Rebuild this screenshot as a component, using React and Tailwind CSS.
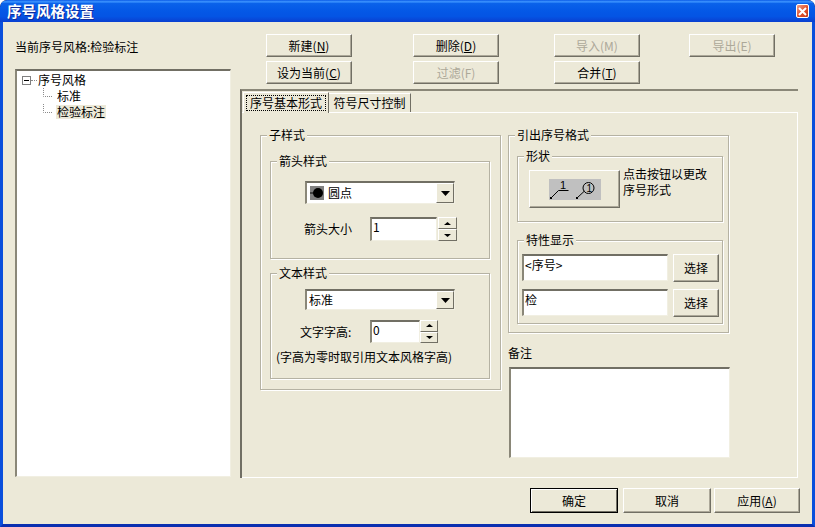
import React from "react";

const FONT = "[font-family:'Noto_Sans_CJK_SC','Liberation_Sans',sans-serif]";

function Btn({ w, h = "h-[23px]", children, disabled, isDefault, className = "" }) {
  return (
    <div
      className={`flex items-center justify-center shrink-0 bg-[#ece9d8] text-[12px] leading-[14px] ${h} ${w} ${className} ${
        isDefault
          ? "border border-black shadow-[inset_1px_1px_0_#fff,inset_-1px_-1px_0_#716f64]"
          : "border-t border-l border-t-white border-l-white border-r border-b border-r-[#716f64] border-b-[#716f64] shadow-[inset_-1px_-1px_0_#aca899]"
      } ${disabled ? "text-[#aca899]" : "text-black"}`}
    >
      {children}
    </div>
  );
}

function Group({ title, className = "", children }) {
  return (
    <div className={`relative shrink-0 border border-[#b5b2a3] shadow-[1px_1px_0_#fff,inset_1px_1px_0_#fff] ${className}`}>
      <span className="absolute left-[6px] top-[-8px] bg-[#ece9d8] px-[2px] text-[12px] leading-[14px] text-black">{title}</span>
      {children}
    </div>
  );
}

function Sunken({ className = "", children }) {
  return (
    <div className={`shrink-0 bg-white border-t-2 border-l-2 border-t-[#716f64] border-l-[#8a8778] border-r border-b border-r-[#f1efe2] border-b-[#f1efe2] text-[12px] leading-[14px] text-black ${className}`}>
      {children}
    </div>
  );
}

function Tri({ up, w = 9, h = 5 }) {
  return (
    <svg width={w} height={h} viewBox={`0 0 ${w} ${h}`} className="block">
      <polygon points={up ? `${w / 2},0 0,${h} ${w},${h}` : `0,0 ${w},0 ${w / 2},${h}`} fill="#000" />
    </svg>
  );
}

function Raised({ className = "", children }) {
  return (
    <div className={`flex items-center justify-center bg-[#ece9d8] border-t border-l border-t-white border-l-white border-r border-b border-r-[#716f64] border-b-[#716f64] ${className}`}>
      {children}
    </div>
  );
}

function Spin({ w }) {
  return (
    <div className={`flex flex-col self-stretch shrink-0 ${w}`}>
      <Raised className="flex-1"><Tri up w={7} h={3} /></Raised>
      <Raised className="flex-1"><Tri w={7} h={3} /></Raised>
    </div>
  );
}

function Select({ h, children }) {
  return (
    <Sunken className={`flex items-stretch w-[150px] ${h}`}>
      <div className="flex-1 flex items-center pl-[2px]">{children}</div>
      <Raised className="w-[18px]"><Tri w={9} h={5} /></Raised>
    </Sunken>
  );
}

function TreeLine() {
  return (
    <svg width="11" height="16" viewBox="0 0 11 16" className="block shrink-0">
      <path d="M0.5 0V8.5H10" stroke="#8a8a8a" strokeDasharray="1 1" fill="none" />
    </svg>
  );
}

export default function App() {
  return (
    <div className={`w-[815px] h-[527px] flex flex-col overflow-hidden bg-[#0a1c66] rounded-t-[7px] ${FONT}`}>
      {/* title bar */}
      <div className="h-[22px] shrink-0 flex items-center justify-between pl-[7px] pr-[6px] rounded-t-[7px] bg-[linear-gradient(180deg,#0a5ae6_0%,#3d95ff_8%,#0a62ea_16%,#0458e6_50%,#0454e4_75%,#0a3fd0_100%)]">
        <span className="text-[14.5px] leading-[18px] font-bold text-white [text-shadow:1px_1px_0_#0f2a99]">序号风格设置</span>
        <div className="flex items-center justify-center w-[13px] h-[14px] rounded-[2px] border border-white bg-[linear-gradient(135deg,#f0a08a,#e0502a_55%,#c23a1a)]">
          <svg width="9" height="9" viewBox="0 0 9 9"><path d="M1 1L8 8M8 1L1 8" stroke="#fff" strokeWidth="2" /></svg>
        </div>
      </div>

      {/* body */}
      <div className="flex-1 flex flex-col bg-[#ece9d8] border-x-[3px] border-b-[3px] border-x-[#0a4fdc] border-b-[#0a2fb0] text-black">
        <div className="flex">
          {/* left column */}
          <div className="w-[216px] ml-[12px] shrink-0">
            <div className="mt-[18px] h-[14px] text-[12px] leading-[14px]">当前序号风格:检验标注</div>
            <Sunken className="mt-[15px] h-[408px] pt-[1px] pl-[5px]">
              <div className="flex items-center h-[16px]">
                <div className="w-[9px] h-[9px] bg-white border border-[#808080] flex items-center justify-center shrink-0">
                  <div className="w-[5px] h-px bg-black" />
                </div>
                <div className="w-[6px] border-t border-dotted border-[#8a8a8a]" />
                <span className="ml-px">序号风格</span>
              </div>
              <div className="flex items-center h-[16px] ml-[21px]">
                <TreeLine />
                <span className="ml-[3px]">标准</span>
              </div>
              <div className="flex items-center h-[16px] ml-[21px]">
                <TreeLine />
                <span className="ml-[2px] bg-[#ece9d8] px-px">检验标注</span>
              </div>
            </Sunken>
          </div>

          {/* right column */}
          <div className="ml-[9px] flex flex-col shrink-0">
            <div className="mt-[12px] flex">
              <Btn w="w-[86px]" className="ml-[26px]">新建(<u>N</u>)</Btn>
              <Btn w="w-[86px]" className="ml-[61px]">删除(<u>D</u>)</Btn>
              <Btn w="w-[86px]" className="ml-[55px]" disabled>导入(M)</Btn>
              <Btn w="w-[86px]" className="ml-[49px]" disabled>导出(E)</Btn>
            </div>
            <div className="mt-[4px] flex">
              <Btn w="w-[86px]" className="ml-[26px]">设为当前(<u>C</u>)</Btn>
              <Btn w="w-[86px]" className="ml-[61px]" disabled>过滤(F)</Btn>
              <Btn w="w-[86px]" className="ml-[55px]">合并(<u>T</u>)</Btn>
            </div>

            {/* tab control */}
            <div className="mt-[5px] w-[558px] h-[389px] flex flex-col border-t-2 border-l-2 border-t-[#8a8778] border-l-[#716f64]">
              <div className="h-[21px] shrink-0 flex items-end pl-[1px] text-[12px] leading-[14px]">
                <div className="relative z-10 -mb-px h-[21px] w-[86px] p-[2px] bg-[#ece9d8] border-t border-l border-t-white border-l-white border-r border-r-[#716f64]">
                  <div className="h-full pb-px flex items-center justify-center border border-dotted border-black">序号基本形式</div>
                </div>
                <div className="h-[19px] w-[82px] flex items-center justify-center bg-[#ece9d8] border-t border-t-white border-r border-r-[#716f64]">符号尺寸控制</div>
              </div>
              <div className="flex-1 flex gap-[7px] pt-[22px] pl-[18px] border-t border-r border-b border-white">
                {/* left groups */}
                <Group title="子样式" className="w-[241px] h-[255px] pl-[9px] pt-[25px]">
                  <Group title="箭头样式" className="w-[220px] h-[98px]">
                    <div className="ml-[34px] mt-[19px]">
                      <Select h="h-[23px]">
                        <div className="flex items-center">
                          <svg width="14" height="14" viewBox="0 0 14 14" className="block ml-[1px]">
                            <rect width="14" height="14" fill="#808080" />
                            <path d="M0 7H4" stroke="#000" />
                            <circle cx="8" cy="7" r="5" fill="#000" />
                          </svg>
                          <span className="ml-[4px]">圆点</span>
                        </div>
                      </Select>
                    </div>
                    <div className="flex items-center mt-[13px] ml-[33px]">
                      <span className="w-[66px] text-[12px] leading-[14px]">箭头大小</span>
                      <Sunken className="w-[67px] h-[24px] pl-px pt-[1px]">1</Sunken>
                      <div className="w-px" />
                      <Spin w="w-[19px]" />
                    </div>
                  </Group>
                  <Group title="文本样式" className="w-[220px] h-[106px] mt-[14px]">
                    <div className="ml-[34px] mt-[15px]">
                      <Select h="h-[21px]"><span>标准</span></Select>
                    </div>
                    <div className="flex items-center mt-[10px] ml-[29px]">
                      <span className="w-[70px] text-[12px] leading-[14px]">文字字高:</span>
                      <Sunken className="w-[50px] h-[23px] pl-px pt-[1px]">0</Sunken>
                      <Spin w="w-[18px]" />
                    </div>
                    <div className="mt-[7px] ml-[5px] text-[12px] leading-[14px] whitespace-nowrap">(字高为零时取引用文本风格字高)</div>
                  </Group>
                </Group>

                {/* right groups */}
                <div className="flex flex-col">
                  <Group title="引出序号格式" className="w-[221px] h-[198px] pl-[8px] pt-[20px]">
                    <Group title="形状" className="w-[206px] h-[66px]">
                      <div className="flex mt-[9px] ml-[11px]">
                        <Raised className="mt-[4px] w-[91px] h-[38px] shrink-0 shadow-[inset_-1px_-1px_0_#aca899]">
                          <svg width="52" height="21" viewBox="0 0 52 21" className="block bg-[#c0c0c0]">
                            <path d="M2 19L9.5 11.5H19.5" stroke="#000" fill="none" />
                            <rect x="1" y="18" width="2" height="2" fill="#000" />
                            <text x="11" y="10" fontSize="11" fill="#000" fontFamily="Liberation Sans">1</text>
                            <path d="M28 19L35.5 12" stroke="#000" fill="none" />
                            <rect x="27" y="18" width="2" height="2" fill="#000" />
                            <circle cx="39.5" cy="9" r="5.5" stroke="#000" fill="none" />
                            <text x="37.5" y="12.5" fontSize="10" fill="#000" fontFamily="Liberation Sans">1</text>
                          </svg>
                        </Raised>
                        <div className="ml-[3px] text-[12px] leading-[16px]">点击按钮以更改<br />序号形式</div>
                      </div>
                    </Group>
                    <Group title="特性显示" className="w-[206px] h-[84px] mt-[18px]">
                      <div className="flex mt-[13px] ml-[4px]">
                        <Sunken className="w-[146px] h-[27px] pl-[1px] pt-[2px]">&lt;序号&gt;</Sunken>
                        <Btn w="w-[46px]" h="h-[28px]" className="ml-[5px]">选择</Btn>
                      </div>
                      <div className="flex mt-[7px] ml-[4px]">
                        <Sunken className="w-[146px] h-[27px] pl-[1px] pt-[2px]">检</Sunken>
                        <Btn w="w-[46px]" h="h-[28px]" className="ml-[5px]">选择</Btn>
                      </div>
                    </Group>
                  </Group>
                  <div className="mt-[13px] h-[14px] text-[12px] leading-[14px]">备注</div>
                  <Sunken className="mt-[7px] ml-px w-[221px] h-[91px]" />
                </div>
              </div>
            </div>
          </div>
        </div>

        {/* bottom buttons */}
        <div className="mt-[10px] flex justify-end pr-[12px]">
          <Btn w="w-[88px]" h="h-[25px]" isDefault>确定</Btn>
          <Btn w="w-[88px]" h="h-[25px]" className="ml-[5px]">取消</Btn>
          <Btn w="w-[86px]" h="h-[25px]" className="ml-[3px]">应用(<u>A</u>)</Btn>
        </div>
      </div>
    </div>
  );
}
